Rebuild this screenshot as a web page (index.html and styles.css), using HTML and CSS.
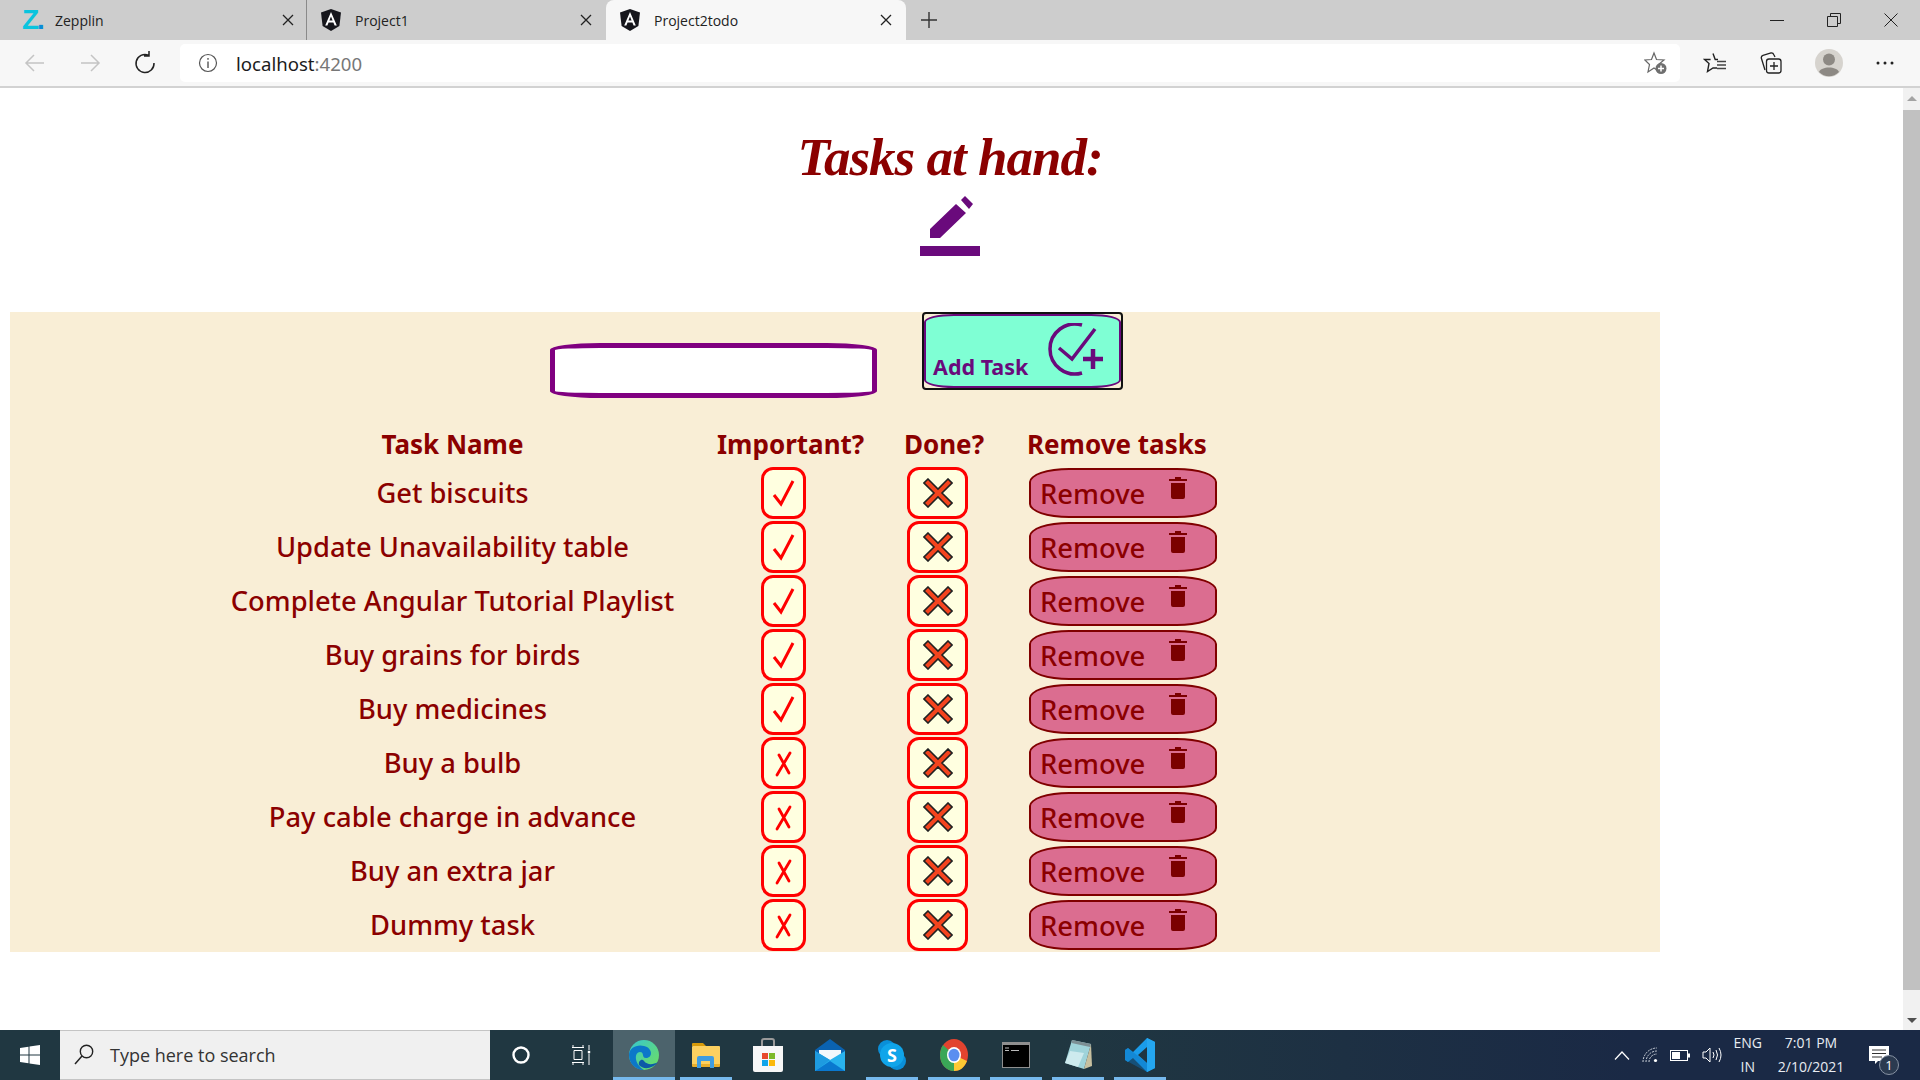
FILE: index.html
```html
<!DOCTYPE html>
<html lang="en">
<head>
    <meta charset="UTF-8">
    <title>Project2todo</title>
    <link rel="stylesheet" href="styles.css">
</head>
<body>
    <svg class="defs" width="0" height="0">
        <symbol id="angular" viewBox="0 0 20 22">
            <path d="M10 0 20 3.6 18.4 17 10 22 1.6 17 0 3.6z" fill="#16161c"/>
            <path d="M10 3 4.2 16.5H6.4L7.6 13.4H12.4L13.6 16.5H15.8zM8.4 11.4 10 7.4 11.6 11.4z" fill="#fff"/>
        </symbol>
        <symbol id="check" viewBox="0 0 45 52">
            <path d="M13 28 20 37 32 14" fill="none" stroke="#f00" stroke-width="3"/>
        </symbol>
        <symbol id="cross" viewBox="0 0 45 52">
            <path d="M29 16 16 38M18 18 28 36" fill="none" stroke="#f00" stroke-width="2.8" stroke-linecap="round"/>
        </symbol>
        <symbol id="bigx" viewBox="0 0 30 30">
            <path d="M5 1 15 11 25 1 29 5 19 15 29 25 25 29 15 19 5 29 1 25 11 15 1 5z" fill="#f4441e" stroke="#222" stroke-width="1.6"/>
        </symbol>
        <symbol id="trash" viewBox="0 0 20 24">
            <path d="M1 3H7V1H13V3H19V5H1zM3 7H17V21Q17 23 15 23H5Q3 23 3 21z" fill="#7b0000"/>
        </symbol>
    </svg>

    <div class="tabstrip">
        <div class="tab">
            <span class="zep">Z<i>.</i></span>
            <span class="tab-title">Zepplin</span>
            <svg class="tab-x" width="12" height="12" viewBox="0 0 12 12"><path d="M1 1 11 11M11 1 1 11" stroke="#222" stroke-width="1.3"/></svg>
        </div>
        <div class="tab tab-sep">
            <svg class="fav" width="20" height="22"><use href="#angular"/></svg>
            <span class="tab-title">Project1</span>
            <svg class="tab-x" width="12" height="12" viewBox="0 0 12 12"><path d="M1 1 11 11M11 1 1 11" stroke="#222" stroke-width="1.3"/></svg>
        </div>
        <div class="tab tab-on">
            <svg class="fav" width="20" height="22"><use href="#angular"/></svg>
            <span class="tab-title">Project2todo</span>
            <svg class="tab-x" width="12" height="12" viewBox="0 0 12 12"><path d="M1 1 11 11M11 1 1 11" stroke="#222" stroke-width="1.3"/></svg>
        </div>
        <svg class="plus" width="18" height="18" viewBox="0 0 18 18"><path d="M9 1V17M1 9H17" stroke="#333" stroke-width="1.4"/></svg>
        <div class="winbtns">
            <svg width="14" height="14" viewBox="0 0 14 14"><path d="M0 7.5H14" stroke="#222" stroke-width="1"/></svg>
            <svg width="14" height="14" viewBox="0 0 14 14"><path d="M.5 3.5H10.5V13.5H.5zM3.5 3.5V.5H13.5V10.5H10.5" fill="none" stroke="#222"/></svg>
            <svg width="14" height="14" viewBox="0 0 14 14"><path d="M.5.5 13.5 13.5M13.5.5 .5 13.5" stroke="#222"/></svg>
        </div>
    </div>

    <div class="toolbar">
        <svg class="nav" width="22" height="22" viewBox="0 0 22 22"><path d="M20 11H2M10 3 2 11 10 19" fill="none" stroke="#c4c4c4" stroke-width="1.5"/></svg>
        <svg class="nav" width="22" height="22" viewBox="0 0 22 22"><path d="M2 11H20M12 3 20 11 12 19" fill="none" stroke="#c4c4c4" stroke-width="1.5"/></svg>
        <svg class="nav" width="22" height="24" viewBox="0 0 22 24"><path d="M14.5 4.2A9 9 0 1 0 20 12M15 0V5H10" fill="none" stroke="#222" stroke-width="1.5"/></svg>
        <div class="urlbar">
            <svg width="20" height="20" viewBox="0 0 20 20"><circle cx="10" cy="10" r="8.5" fill="none" stroke="#555" stroke-width="1.2"/><path d="M10 8.5V15M10 5V6.8" stroke="#555" stroke-width="1.4"/></svg>
            <span class="url">localhost<span class="port">:4200</span></span>
            <svg class="url-star" width="24" height="24" viewBox="0 0 24 24"><path d="M10 2 12.5 8.5 20 9 14.5 13.5 16 21 10 17 4 21 5.5 13.5 0.8 9 7.5 8.5z" fill="none" stroke="#666" stroke-width="1.2"/><circle cx="17" cy="17.5" r="5.5" fill="#6f6f6f"/><path d="M17 14.5V20.5M14 17.5H20" stroke="#fff" stroke-width="1.5"/></svg>
        </div>
        <div class="tools">
            <svg width="24" height="22" viewBox="0 0 24 22"><path d="M10 1.5 12.2 7.5H15M7.6 7.5H1.5L6 11.5 4.5 19.5 10 16 14 16" fill="none" stroke="#222" stroke-width="1.4"/><path d="M14 9.5H23M14 13H23M14 16.5H23" stroke="#444" stroke-width="1.4"/></svg>
            <svg width="22" height="22" viewBox="0 0 22 22"><path d="M5 18 1.3 6Q1 4 3 3.3L11 1Q13 .6 14 3L15 5" fill="none" stroke="#222" stroke-width="1.3"/><rect x="6.5" y="7" width="14.5" height="14" rx="2.5" fill="none" stroke="#222" stroke-width="1.3"/><path d="M14 10V18M10 14H18" stroke="#222" stroke-width="1.3"/></svg>
            <svg class="avatar" width="28" height="28" viewBox="0 0 28 28"><circle cx="14" cy="14" r="14" fill="#d6d3ce"/><circle cx="14" cy="10.5" r="6" fill="#8d8984"/><path d="M4 23C6 17 22 17 24 23A14 14 0 0 1 4 23z" fill="#8d8984"/></svg>
            <svg width="18" height="4" viewBox="0 0 18 4"><circle cx="2" cy="2" r="1.5" fill="#222"/><circle cx="9" cy="2" r="1.5" fill="#222"/><circle cx="16" cy="2" r="1.5" fill="#222"/></svg>
        </div>
    </div>

    <div class="viewport">
        <main class="page">
            <div class="heading">
                <h1 class="title">Tasks at hand:</h1>
                <svg class="pencil" width="60" height="61" viewBox="0 0 60 61">
                    <path d="M10 42V33L36 8 46 17 20 42zM41 4 45 0 53 8 49 13z" fill="#6a0a7c"/>
                    <rect y="50" width="60" height="10" fill="#6a0a7c"/>
                </svg>
            </div>

            <section class="panel">
                <div class="add-row">
                    <input class="task-input" type="text">
                    <button class="add-btn">
                        <span class="add-inner">
                            <span class="add-label">Add Task</span>
                            <svg width="60" height="54" viewBox="0 0 60 54">
                                <path d="M34 2A25 25 0 1 0 34 50" fill="none" stroke="#6a0a7c" stroke-width="3.5"/>
                                <path d="M11 25 24 36 47 6" fill="none" stroke="#6a0a7c" stroke-width="3.5"/>
                                <path d="M45 26V46M35 36H55" stroke="#6a0a7c" stroke-width="4.5"/>
                            </svg>
                        </span>
                    </button>
                </div>

                <div class="tasks">
                    <div class="th">Task Name</div>
                    <div class="th">Important?</div>
                    <div class="th">Done?</div>
                    <div class="th th-remove">Remove tasks</div>

                    <div class="name">Get biscuits</div>
                    <div class="box box-imp"><svg><use href="#check"/></svg></div>
                    <div class="box box-done"><svg><use href="#bigx"/></svg></div>
                    <button class="remove">Remove<svg><use href="#trash"/></svg></button>

                    <div class="name">Update Unavailability table</div>
                    <div class="box box-imp"><svg><use href="#check"/></svg></div>
                    <div class="box box-done"><svg><use href="#bigx"/></svg></div>
                    <button class="remove">Remove<svg><use href="#trash"/></svg></button>

                    <div class="name">Complete Angular Tutorial Playlist</div>
                    <div class="box box-imp"><svg><use href="#check"/></svg></div>
                    <div class="box box-done"><svg><use href="#bigx"/></svg></div>
                    <button class="remove">Remove<svg><use href="#trash"/></svg></button>

                    <div class="name">Buy grains for birds</div>
                    <div class="box box-imp"><svg><use href="#check"/></svg></div>
                    <div class="box box-done"><svg><use href="#bigx"/></svg></div>
                    <button class="remove">Remove<svg><use href="#trash"/></svg></button>

                    <div class="name">Buy medicines</div>
                    <div class="box box-imp"><svg><use href="#check"/></svg></div>
                    <div class="box box-done"><svg><use href="#bigx"/></svg></div>
                    <button class="remove">Remove<svg><use href="#trash"/></svg></button>

                    <div class="name">Buy a bulb</div>
                    <div class="box box-imp"><svg><use href="#cross"/></svg></div>
                    <div class="box box-done"><svg><use href="#bigx"/></svg></div>
                    <button class="remove">Remove<svg><use href="#trash"/></svg></button>

                    <div class="name">Pay cable charge in advance</div>
                    <div class="box box-imp"><svg><use href="#cross"/></svg></div>
                    <div class="box box-done"><svg><use href="#bigx"/></svg></div>
                    <button class="remove">Remove<svg><use href="#trash"/></svg></button>

                    <div class="name">Buy an extra jar</div>
                    <div class="box box-imp"><svg><use href="#cross"/></svg></div>
                    <div class="box box-done"><svg><use href="#bigx"/></svg></div>
                    <button class="remove">Remove<svg><use href="#trash"/></svg></button>

                    <div class="name">Dummy task</div>
                    <div class="box box-imp"><svg><use href="#cross"/></svg></div>
                    <div class="box box-done"><svg><use href="#bigx"/></svg></div>
                    <button class="remove">Remove<svg><use href="#trash"/></svg></button>
                </div>
            </section>
        </main>
        <div class="scrollbar">
            <span class="arrow-up"></span>
            <div class="thumb"></div>
            <span class="arrow-down"></span>
        </div>
    </div>

    <footer class="taskbar">
        <div class="start">
            <svg width="20" height="20" viewBox="0 0 20 20"><path d="M0 3 8.5 1.8V9.5H0zM9.5 1.6 20 0V9.5H9.5zM0 10.5H8.5V18.2L0 17zM9.5 10.5H20V20L9.5 18.4z" fill="#fff"/></svg>
        </div>
        <div class="search">
            <svg width="20" height="22" viewBox="0 0 20 22"><circle cx="12.5" cy="7.5" r="6.2" fill="none" stroke="#222" stroke-width="1.4"/><path d="M8 12 1 20" stroke="#222" stroke-width="1.5"/></svg>
            <span>Type here to search</span>
        </div>
        <div class="task-btn"><svg width="20" height="20" viewBox="0 0 20 20"><circle cx="10" cy="10" r="7.5" fill="none" stroke="#fff" stroke-width="2.4"/></svg></div>
        <div class="task-btn task-view"><svg width="20" height="20" viewBox="0 0 20 20"><path d="M1 2.5H13M3 5.5H11V14.5H3zM1 17.5H13M2 17.5V20M12 17.5V20M2 0V2.5M12 0V2.5M18 0V5M18 8.5V20" fill="none" stroke="#fff" stroke-width="1"/><rect x="16.8" y="5.8" width="2.4" height="2.4" fill="#fff"/></svg></div>
        <div class="app app-on app-edge">
            <svg width="30" height="30" viewBox="0 0 30 30">
                <defs>
                    <linearGradient id="eg" x1="0" y1="0" x2="1" y2="1"><stop offset="0" stop-color="#37c6d0"/><stop offset="1" stop-color="#6fe05c"/></linearGradient>
                </defs>
                <circle cx="15" cy="15" r="15" fill="url(#eg)"/>
                <path d="M0 15C0 8 8 4 15 6 24 8 24 18 17 18 12 18 16 12 11 12 5 12 5 24 15 30 6 30 0 23 0 15z" fill="#0c77c9"/>
                <path d="M10 25C14 30 24 29 29 22 24 25 18 25 15 21 13 18 9 21 10 25z" fill="#0d5aa7"/>
            </svg>
        </div>
        <div class="app">
            <svg width="28" height="26" viewBox="0 0 28 26"><path d="M0 2Q0 1 1 1H11L14 4H0z" fill="#d79a0a"/><rect y="4" width="28" height="20" rx="1" fill="#fcd060"/><path d="M0 22H28V24Q28 25 27 25H1Q0 25 0 24z" fill="#e9ae2b"/><path d="M5 26V16Q5 14 7 14H20Q22 14 22 16V26H18V19H9V26z" fill="#3f9ce0"/></svg>
        </div>
        <div class="app app-off">
            <svg width="30" height="34" viewBox="0 0 30 34"><path d="M9 9V3Q9 1 11 1H19Q21 1 21 3V9" fill="none" stroke="#9a9a9a" stroke-width="2"/><path d="M0 8H30V32Q30 34 28 34H2Q0 34 0 32z" fill="#f7f7f7"/><rect x="9" y="15" width="6" height="6" fill="#e8492c"/><rect x="16" y="15" width="6" height="6" fill="#7db928"/><rect x="9" y="22" width="6" height="6" fill="#12a5ea"/><rect x="16" y="22" width="6" height="6" fill="#fbb80a"/></svg>
        </div>
        <div class="app app-off">
            <svg width="30" height="32" viewBox="0 0 30 32"><path d="M0 11 15 0 30 11V14H0z" fill="#0a62b0"/><path d="M4 11H26V20L15 26 4 20z" fill="#f4f8fc"/><path d="M0 12 15 21 30 12V32H0z" fill="#29b3ee"/><path d="M0 32 15 21 0 12z" fill="#1e9be0"/><path d="M0 32 15 22 30 32z" fill="#0a78cf"/></svg>
        </div>
        <div class="app">
            <svg width="28" height="30" viewBox="0 0 28 30"><circle cx="9" cy="9" r="9" fill="#0a8fd8"/><circle cx="19" cy="21" r="9" fill="#0a8fd8"/><circle cx="14" cy="15" r="12" fill="#10a5ea"/><text x="14" y="21.5" class="skype-s">S</text></svg>
        </div>
        <div class="app">
            <svg width="28" height="32" viewBox="0 0 28 32"><ellipse cx="14" cy="16" rx="14" ry="16" fill="#e2432f"/><path d="M14 16 27 22C24 29 20 32 14 32z" fill="#fcc934"/><path d="M14 16 14 32C6 32 0 25 0 16 0 12 1 9 3 6z" fill="#3aa757"/><ellipse cx="14" cy="16" rx="7" ry="8" fill="#fff"/><ellipse cx="14" cy="16" rx="5.5" ry="6.3" fill="#5a8ef0"/></svg>
        </div>
        <div class="app">
            <svg width="28" height="26" viewBox="0 0 28 26"><rect width="28" height="26" fill="#8f8f8f"/><rect x="1" y="3" width="26" height="22" fill="#000"/><path d="M3 6H7M3 8.5H7M9 8.5H17" stroke="#bbb"/></svg>
        </div>
        <div class="app">
            <svg width="28" height="32" viewBox="0 0 28 32"><path d="M8 1 27 5 20 30 1 24z" fill="#9fd3da"/><path d="M8 1 27 5 26 8 7.5 4z" fill="#7d8f95"/><path d="M20 30 27 5 28 27z" fill="#c7c0a0"/><path d="M1 24 6 12 20 14 14 28z" fill="#cdeaee"/></svg>
        </div>
        <div class="app">
            <svg width="30" height="34" viewBox="0 0 30 34"><path d="M22 0 30 4V30L22 34 8 20 3 24 0 22V12L3 10 8 14zM22 9 13 17 22 25z" fill="#1a9cea"/><path d="M22 0 30 4V30L22 34z" fill="#24a6f0"/><path d="M0 12 3 10 22 25V34L0 22z" fill="#0a72bd" opacity=".45"/></svg>
        </div>
        <div class="tray">
            <svg width="16" height="9" viewBox="0 0 16 9"><path d="M1 8.5 8 1 15 8.5" fill="none" stroke="#fff" stroke-width="1.2"/></svg>
            <svg width="16" height="16" viewBox="0 0 16 16"><path d="M1 15A14 14 0 0 1 15 1M4 15A11 11 0 0 1 15 4M7 15A8 8 0 0 1 15 7" fill="none" stroke="#cfd5dd" stroke-dasharray="2 1" stroke-width="1"/><circle cx="13.5" cy="13.5" r="1.6" fill="#fff"/></svg>
            <svg width="20" height="11" viewBox="0 0 20 11"><rect x=".5" y=".5" width="17" height="10" fill="none" stroke="#fff"/><rect x="2" y="2" width="8" height="7" fill="#fff"/><rect x="18" y="3.5" width="2" height="4" fill="#fff"/></svg>
            <svg width="20" height="16" viewBox="0 0 20 16"><path d="M1 5H4L8 1V15L4 11H1z" fill="none" stroke="#fff"/><path d="M11 5Q13 8 11 11M14 3Q17 8 14 13M17 1Q21 8 17 15" fill="none" stroke="#fff"/></svg>
            <div class="tray-text"><span>ENG</span><span>IN</span></div>
            <div class="tray-text tray-clock"><span>7:01 PM</span><span>2/10/2021</span></div>
            <div class="notify">
                <svg width="20" height="18" viewBox="0 0 20 18"><path d="M0 0H20V15H9L6 18V15H0z" fill="#fff"/><path d="M3 4H17M3 7.5H17M3 11H13" stroke="#333"/></svg>
                <span class="badge">1</span>
            </div>
        </div>
    </footer>
</body>
</html>
```

FILE: styles.css
```css
* {
    box-sizing: border-box;
}
body {
    margin: 0;
    width: 1920px;
    height: 1080px;
    overflow: hidden;
    display: flex;
    flex-direction: column;
    font-family: "Noto Sans", sans-serif;
    background: white;
}
.defs {
    display: none;
}

/* browser tabs */
.tabstrip {
    height: 40px;
    flex: none;
    display: flex;
    align-items: center;
    background: #cdcdcd;
    font-family: "Open Sans", sans-serif;
    font-size: 14px;
    color: #222;
}
.tab {
    width: 300px;
    height: 40px;
    display: flex;
    align-items: center;
    padding: 0 14px;
}
.tab:first-child {
    width: 306px;
    padding-left: 22px;
    padding-right: 12px;
}
.tab-sep {
    border-left: 1px solid #8a8a8a;
    background-clip: padding-box;
}
.tab-on {
    background: #f7f7f7;
    border-radius: 8px 8px 0 0;
}
.tab-title {
    flex: 1;
    margin-left: 14px;
}
.zep {
    font-family: "Liberation Sans", sans-serif;
    font-weight: bold;
    font-size: 28px;
    line-height: 26px;
    color: #0ac4de;
    width: 19px;
}
.zep i {
    font-style: normal;
    color: #0a8bd8;
    margin-left: -2px;
}
.plus {
    margin-left: 14px;
}
.winbtns {
    margin-left: auto;
    display: flex;
    gap: 43px;
    padding-right: 22px;
}

/* address bar row */
.toolbar {
    height: 48px;
    flex: none;
    display: flex;
    align-items: center;
    padding-left: 24px;
    background: #f7f7f7;
    border-bottom: 2px solid #d2d2d2;
}
.nav {
    margin-right: 33px;
}
.urlbar {
    width: 1500px;
    height: 38px;
    margin-left: -9px;
    display: flex;
    align-items: center;
    padding: 0 8px 0 18px;
    background: white;
    border-radius: 5px;
}
.url {
    margin-left: 18px;
    font-size: 18.6px;
    color: #1c1c1c;
}
.port {
    color: #777;
}
.url-star {
    margin-left: auto;
    margin-right: 4px;
}
.tools {
    display: flex;
    align-items: center;
    gap: 33px;
    margin-left: 23px;
}

/* page */
.viewport {
    flex: 1;
    min-height: 0;
    display: flex;
}
.page {
    flex: 1;
    min-width: 0;
}
.heading {
    height: 224px;
    padding-right: 3px;
    text-align: center;
}
.title {
    margin: 0;
    padding-top: 30px;
    font-family: "Liberation Serif", serif;
    font-style: italic;
    font-weight: bold;
    font-size: 53px;
    letter-spacing: -1px;
    line-height: 78px;
    height: 108px;
    color: #8b0000;
}
.pencil {
    display: block;
    margin: 0 auto;
}
.panel {
    width: 1650px;
    height: 640px;
    margin-left: 10px;
    background: #f9eed6;
}
.add-row {
    display: flex;
    align-items: flex-start;
    padding-left: 540px;
}
.task-input {
    width: 327px;
    height: 55px;
    margin-top: 31px;
    background: white;
    border: 5px solid #800080;
    border-radius: 50px / 7px;
    outline: none;
}
.add-btn {
    width: 201px;
    height: 78px;
    margin-left: 45px;
    padding: 0;
    background: #f9eed6;
    border: 2px solid #111;
    border-radius: 4px;
}
.add-inner {
    height: 100%;
    display: flex;
    align-items: flex-end;
    justify-content: space-between;
    padding: 0 11px 4px 7px;
    background: #7fffd4;
    border: 2px solid #6a0a7c;
    border-radius: 30px / 8px;
    font-family: "Noto Sans", sans-serif;
    font-size: 21.5px;
    font-weight: bold;
    color: #6a0a7c;
}
.add-label {
    line-height: 30px;
}
.add-inner svg {
    align-self: flex-start;
    margin-top: 7px;
}

/* task table */
.tasks {
    display: grid;
    grid-template-columns: 447px 145px 82px 190px;
    grid-template-rows: 42px;
    grid-auto-rows: 54px;
    column-gap: 41px;
    padding-left: 219px;
    margin-top: 27px;
    color: #8b0000;
    font-size: 26px;
}
.th {
    font-weight: bold;
    height: 42px;
    line-height: 38px;
    white-space: nowrap;
    text-align: center;
}
.th-remove {
    text-align: left;
    padding-left: 1px;
}
.name {
    text-align: center;
    font-size: 27.3px;
    font-weight: 500;
    line-height: 52px;
    white-space: nowrap;
}
.box {
    height: 52px;
    display: flex;
    align-items: center;
    justify-content: center;
    background: #ffffe0;
    border: 3px solid #f00;
    border-radius: 12px;
}
.box-imp {
    width: 45px;
    margin-left: 44px;
}
.box-imp svg {
    width: 45px;
    height: 52px;
    flex: none;
}
.box-done {
    width: 61px;
    margin-left: 4px;
}
.box-done svg {
    width: 30px;
    height: 30px;
}
.remove {
    width: 188px;
    height: 50px;
    margin: 1px 0 0 3px;
    display: flex;
    align-items: center;
    padding: 0 0 0 9px;
    background: #db6d90;
    border: 2px solid #800000;
    border-radius: 40px / 14px;
    font-family: "Noto Sans", sans-serif;
    font-size: 27.4px;
    font-weight: 500;
    color: #8b0000;
}
.remove svg {
    width: 20px;
    height: 24px;
    margin: -10px 0 0 23px;
}

/* scrollbar */
.scrollbar {
    width: 17px;
    flex: none;
    display: flex;
    flex-direction: column;
    align-items: center;
    background: #f1f1f1;
}
.arrow-up,
.arrow-down {
    width: 0;
    height: 0;
    border-left: 5px solid transparent;
    border-right: 5px solid transparent;
}
.arrow-up {
    margin: 8px 0 9px;
    border-bottom: 5px solid #a3a3a3;
}
.arrow-down {
    margin: auto 0 7px;
    border-top: 5px solid #505050;
}
.thumb {
    width: 17px;
    height: 880px;
    background: #c1c1c1;
}

/* windows taskbar */
.taskbar {
    height: 50px;
    flex: none;
    display: flex;
    align-items: center;
    background: linear-gradient(90deg, #203741 0%, #203741 55%, #1a2945 85%);
    color: white;
}
.start {
    width: 60px;
    height: 50px;
    display: flex;
    align-items: center;
    justify-content: center;
}
.search {
    width: 430px;
    height: 50px;
    display: flex;
    align-items: center;
    gap: 16px;
    padding-left: 14px;
    background: #f0f0f0;
    border-top: 1px solid #c4c4c4;
    border-bottom: 1px solid #c4c4c4;
    font-family: "Open Sans", sans-serif;
    font-size: 18px;
    color: #333;
}
.task-btn {
    width: 62px;
    display: flex;
    justify-content: center;
}
.task-btn:first-of-type {
    margin-left: 0;
}
.task-view {
    margin-right: -1px;
}
.task-view svg {
    margin-right: 5px;
}
.app {
    width: 62px;
    height: 50px;
    display: flex;
    align-items: center;
    justify-content: center;
    position: relative;
}
.app::after {
    content: "";
    position: absolute;
    left: 5px;
    right: 5px;
    bottom: 0;
    height: 3px;
    background: #76b9ed;
}
.app-off::after {
    display: none;
}
.app-on {
    background: #4c636c;
}
.app-on::after {
    left: 0;
    right: 0;
}
.skype-s {
    font-family: "Noto Sans", sans-serif;
    font-weight: bold;
    font-size: 18px;
    fill: white;
    text-anchor: middle;
}
.tray {
    margin-left: auto;
    display: flex;
    align-items: center;
    gap: 12px;
    font-family: "Open Sans", sans-serif;
}
.tray-text {
    display: flex;
    flex-direction: column;
    align-items: center;
    font-size: 14px;
    line-height: 24px;
    color: #e8ecf2;
}
.tray-clock {
    margin-left: 2px;
    width: 70px;
}
.notify {
    width: 60px;
    height: 50px;
    margin-left: 2px;
    display: flex;
    align-items: center;
    padding-left: 9px;
    position: relative;
}
.badge {
    position: absolute;
    left: 19px;
    top: 25px;
    width: 20px;
    height: 20px;
    border-radius: 50%;
    background: #2b3a50;
    border: 1px solid #8792a3;
    font-size: 13px;
    line-height: 18px;
    text-align: center;
    color: white;
}
```
